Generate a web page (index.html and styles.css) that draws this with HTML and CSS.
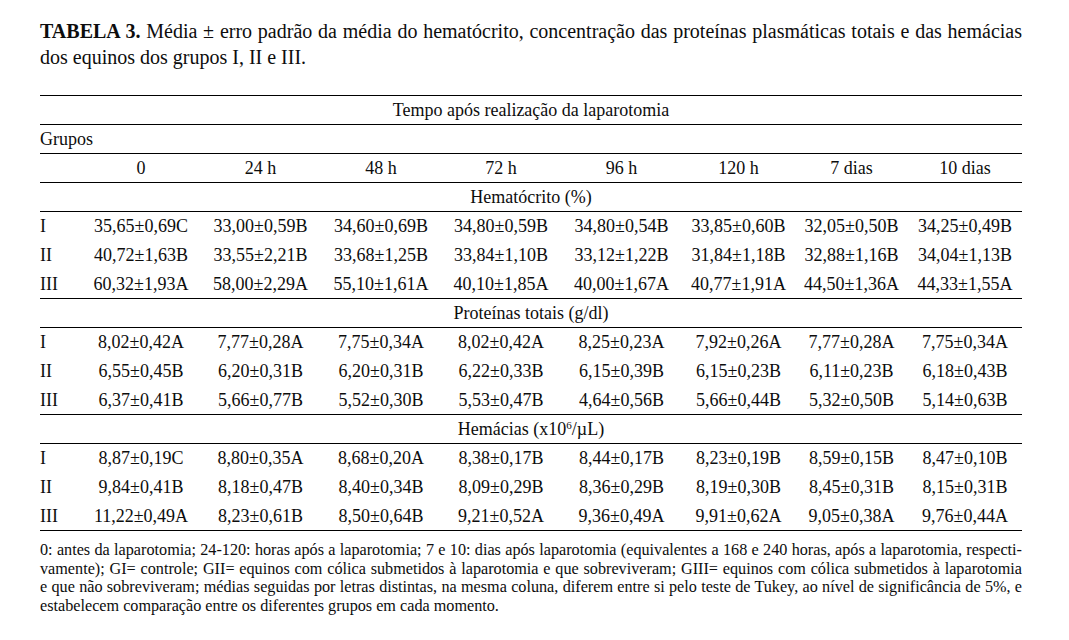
FILE: index.html
```html
<!DOCTYPE html>
<html lang="pt">
<head>
<meta charset="utf-8">
<link rel="stylesheet" href="styles.css">
</head>
<body>
<div class="page">
  <div class="title">
    <span class="tl full"><b>TABELA 3.</b> Média ± erro padrão da média do hematócrito, concentração das proteínas plasmáticas totais e das hemácias</span>
    <span class="tl">dos equinos dos grupos I, II e III.</span>
  </div>
  <table class="data">
    <colgroup>
      <col class="c0"><col class="c1"><col class="c2"><col class="c3"><col class="c4"><col class="c5"><col class="c6"><col class="c7"><col class="c8">
    </colgroup>
    <tr class="line"><td colspan="9" class="center">Tempo após realização da laparotomia</td></tr>
    <tr class="line"><td colspan="9" class="left">Grupos</td></tr>
    <tr class="line"><td></td><td>0</td><td>24 h</td><td>48 h</td><td>72 h</td><td>96 h</td><td>120 h</td><td>7 dias</td><td>10 dias</td></tr>
    <tr class="line"><td colspan="9" class="center">Hematócrito (%)</td></tr>
    <tr><td class="left">I</td><td>35,65±0,69C</td><td>33,00±0,59B</td><td>34,60±0,69B</td><td>34,80±0,59B</td><td>34,80±0,54B</td><td>33,85±0,60B</td><td>32,05±0,50B</td><td>34,25±0,49B</td></tr>
    <tr><td class="left">II</td><td>40,72±1,63B</td><td>33,55±2,21B</td><td>33,68±1,25B</td><td>33,84±1,10B</td><td>33,12±1,22B</td><td>31,84±1,18B</td><td>32,88±1,16B</td><td>34,04±1,13B</td></tr>
    <tr class="line"><td class="left">III</td><td>60,32±1,93A</td><td>58,00±2,29A</td><td>55,10±1,61A</td><td>40,10±1,85A</td><td>40,00±1,67A</td><td>40,77±1,91A</td><td>44,50±1,36A</td><td>44,33±1,55A</td></tr>
    <tr class="line"><td colspan="9" class="center">Proteínas totais (g/dl)</td></tr>
    <tr><td class="left">I</td><td>8,02±0,42A</td><td>7,77±0,28A</td><td>7,75±0,34A</td><td>8,02±0,42A</td><td>8,25±0,23A</td><td>7,92±0,26A</td><td>7,77±0,28A</td><td>7,75±0,34A</td></tr>
    <tr><td class="left">II</td><td>6,55±0,45B</td><td>6,20±0,31B</td><td>6,20±0,31B</td><td>6,22±0,33B</td><td>6,15±0,39B</td><td>6,15±0,23B</td><td>6,11±0,23B</td><td>6,18±0,43B</td></tr>
    <tr class="line"><td class="left">III</td><td>6,37±0,41B</td><td>5,66±0,77B</td><td>5,52±0,30B</td><td>5,53±0,47B</td><td>4,64±0,56B</td><td>5,66±0,44B</td><td>5,32±0,50B</td><td>5,14±0,63B</td></tr>
    <tr class="line"><td colspan="9" class="center">Hemácias (x10<sup>6</sup>/µL)</td></tr>
    <tr><td class="left">I</td><td>8,87±0,19C</td><td>8,80±0,35A</td><td>8,68±0,20A</td><td>8,38±0,17B</td><td>8,44±0,17B</td><td>8,23±0,19B</td><td>8,59±0,15B</td><td>8,47±0,10B</td></tr>
    <tr><td class="left">II</td><td>9,84±0,41B</td><td>8,18±0,47B</td><td>8,40±0,34B</td><td>8,09±0,29B</td><td>8,36±0,29B</td><td>8,19±0,30B</td><td>8,45±0,31B</td><td>8,15±0,31B</td></tr>
    <tr class="line"><td class="left">III</td><td>11,22±0,49A</td><td>8,23±0,61B</td><td>8,50±0,64B</td><td>9,21±0,52A</td><td>9,36±0,49A</td><td>9,91±0,62A</td><td>9,05±0,38A</td><td>9,76±0,44A</td></tr>
  </table>
  <div class="note">
    <span class="nl full">0: antes da laparotomia; 24-120: horas após a laparotomia; 7 e 10: dias após laparotomia (equivalentes a 168 e 240 horas, após a laparotomia, respecti-</span>
    <span class="nl full">vamente); GI= controle; GII= equinos com cólica submetidos à laparotomia e que sobreviveram; GIII= equinos com cólica submetidos à laparotomia</span>
    <span class="nl full">e que não sobreviveram; médias seguidas por letras distintas, na mesma coluna, diferem entre si pelo teste de Tukey, ao nível de significância de 5%, e</span>
    <span class="nl">estabelecem comparação entre os diferentes grupos em cada momento.</span>
  </div>
</div>
</body>
</html>
```

FILE: styles.css
```css
html, body {
  margin: 0;
  padding: 0;
  background: #ffffff;
}

.page {
  width: 982px;
  padding: 18px 0 0 40px;
  font-family: "Liberation Serif", "Times New Roman", serif;
  color: #0d0d0d;
}

.title {
  font-size: 20px;
  line-height: 26px;
}

.title b {
  font-weight: bold;
}

.tl {
  display: block;
  white-space: nowrap;
}

.tl.full {
  text-align: justify;
  text-align-last: justify;
}

.data {
  margin-top: 25px;
  width: 982px;
  border-collapse: collapse;
  table-layout: fixed;
  font-size: 18px;
  border-top: 1px solid #000;
}

.c0 { width: 42px; }
.c1 { width: 118px; }
.c2 { width: 121px; }
.c3 { width: 120px; }
.c4 { width: 120px; }
.c5 { width: 121px; }
.c6 { width: 113px; }
.c7 { width: 113px; }
.c8 { width: 114px; }

.data tr {
  height: 29px;
}

.data td {
  padding: 0;
  text-align: center;
  vertical-align: middle;
  white-space: nowrap;
  line-height: 20px;
}

.data td.left {
  text-align: left;
}

.data tr.line td {
  border-bottom: 1px solid #000;
}

.data sup {
  font-size: 11px;
  line-height: 0;
  vertical-align: 6px;
}

.note {
  margin: 10px 0 0 0;
  font-size: 16.2px;
  line-height: 18.7px;
}

.nl {
  display: block;
  white-space: nowrap;
}

.nl.full {
  text-align: justify;
  text-align-last: justify;
}
```
